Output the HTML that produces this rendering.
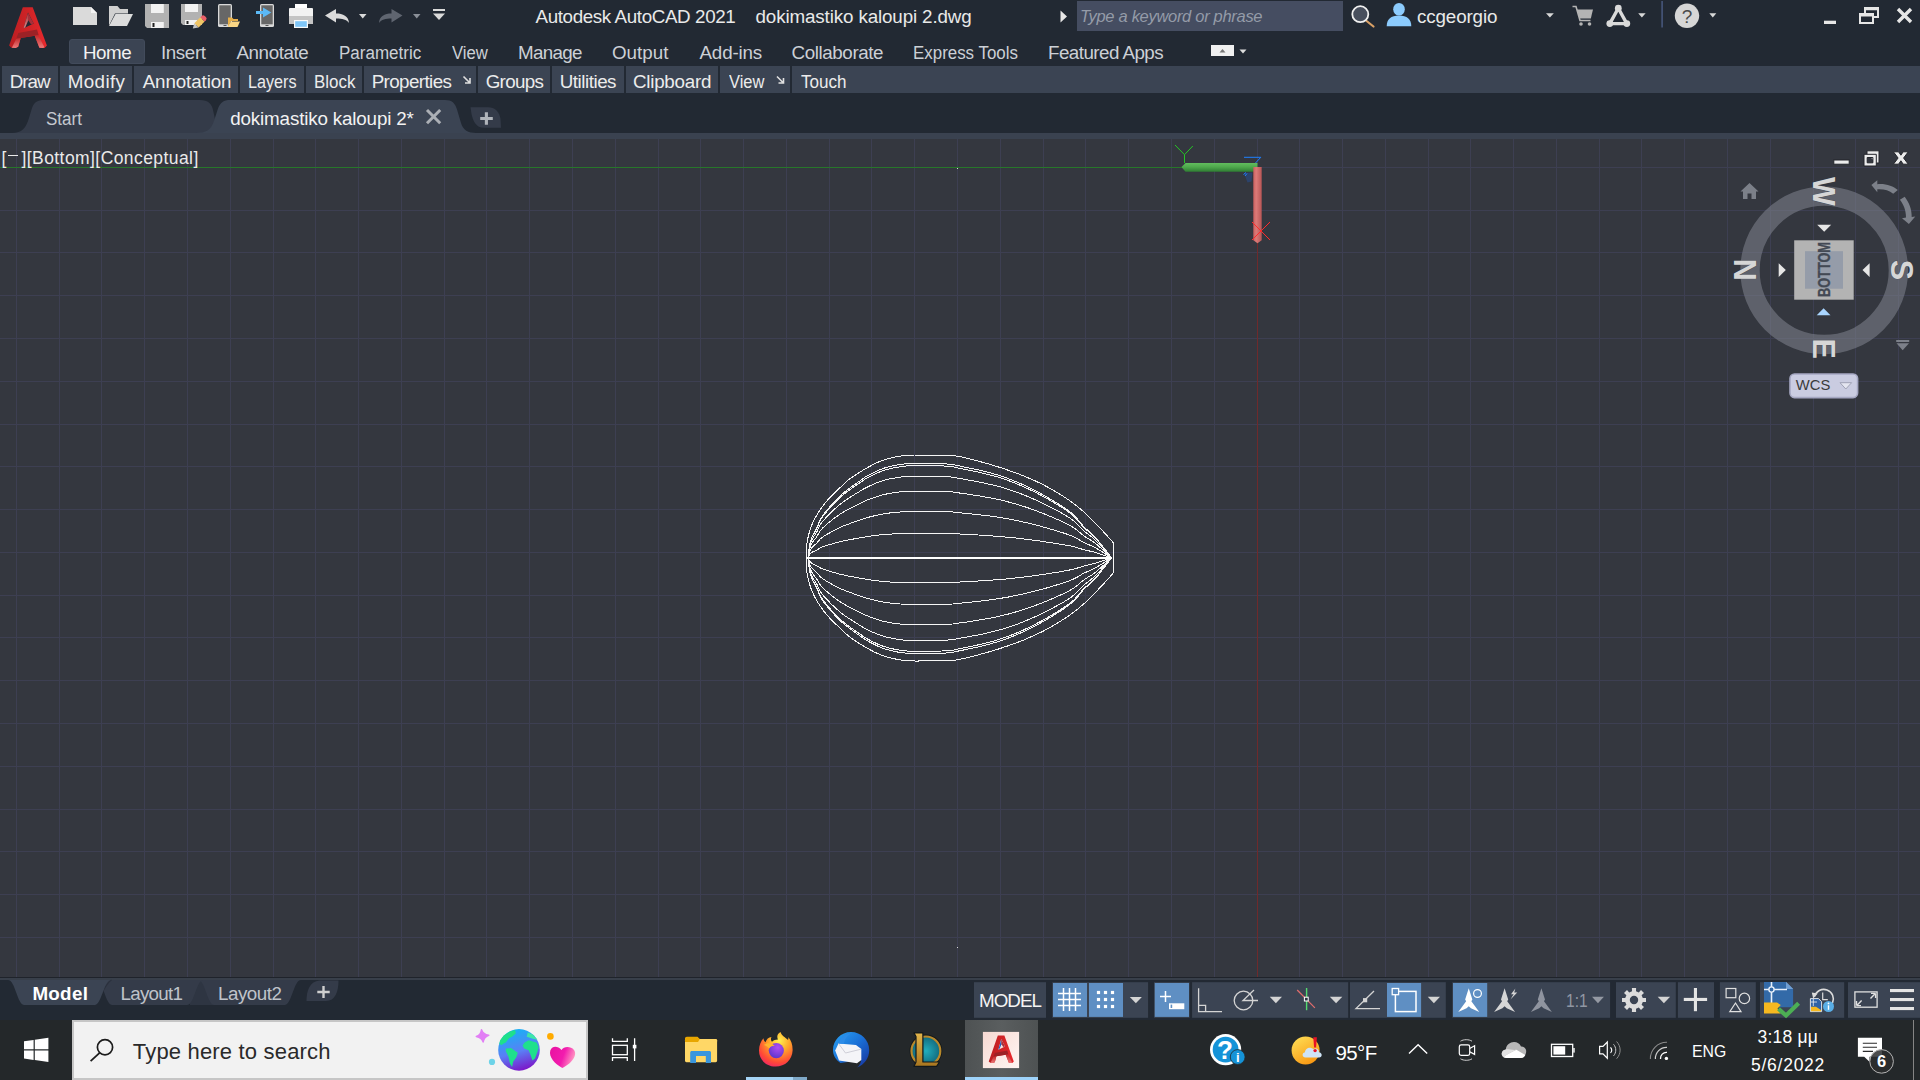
<!DOCTYPE html>
<html lang="en"><head><meta charset="utf-8"><title>Autodesk AutoCAD 2021 - dokimastiko kaloupi 2.dwg</title>
<style>
*{margin:0;padding:0;box-sizing:border-box}
html,body{width:1920px;height:1080px;overflow:hidden;background:#222933;font-family:"Liberation Sans",sans-serif}
.abs,.t,svg.i{position:absolute}
.t{white-space:pre;line-height:1;}
.pb{position:absolute;top:66px;height:27px;background:#3b4453}
</style></head>
<body>
<div id="titlebar" class="abs" style="left:0;top:0;width:1920px;height:39px;background:#222933"></div>
<svg class="i" id="qat" style="left:0;top:0" width="1920" height="66" viewBox="0 0 1920 66">
<defs><linearGradient id="ag" x1="0" y1="0" x2="1" y2="0"><stop offset="0" stop-color="#ba1e22"/><stop offset="0.5" stop-color="#cf2326"/><stop offset="1" stop-color="#e8292d"/></linearGradient><linearGradient id="al" x1="0" y1="0" x2="0" y2="1"><stop offset="0" stop-color="#c02a2c"/><stop offset="1" stop-color="#ee7a7a"/></linearGradient><linearGradient id="ab" x1="0" y1="0" x2="0" y2="1"><stop offset="0" stop-color="#a32a30"/><stop offset="1" stop-color="#e08a8a"/></linearGradient></defs><path d="M22.8 7.3H32.7L46.9 45.6L44.6 48L39.4 47.7L34.75 35.8L20.7 37.9L18.2 46.7L15.6 48L11.4 47.7L9.1 45.6ZM28 12.4L23.6 28.3L33.7 23.6Z" fill="url(#ag)" fill-rule="evenodd"/><path d="M28 12.4L23.6 28.3L25.3 27.2L28.3 20.3Z" fill="url(#ab)"/><path d="M28 12.4L33.7 23.6L31.1 24.4L28 19.7Z" fill="#a8303a"/><path d="M18.3 33L37 29.4L38.7 35.2L34.75 35.8L20.7 37.9L16.3 38.7Z" fill="#9c2226"/><path d="M16.3 38.7L20.7 37.9L18.2 46.7L15.6 48L11.8 47.7Z" fill="url(#al)"/><path d="M34.75 35.8L38.2 35.3L44.2 46.8L43.5 48L39.4 47.7Z" fill="url(#al)"/>
<path d="M73 7H91L97 13V25H73Z" fill="#dadada"/><path d="M91 7V13H97Z" fill="#f4f4f4"/>
<path d="M109 25.5V6H117.5L120 9H128V13.5H115Z" fill="#d0d0d0"/><path d="M109 26L115.5 14H133L127 26Z" fill="#dcdcdc"/>
<path d="M145 4H169V28H147L145 26Z" fill="#b2b2b2"/><rect x="151" y="4" width="12.8" height="9" fill="#f2f2f2"/><rect x="151" y="22" width="12.8" height="6" fill="#f2f2f2"/><rect x="152.5" y="23" width="2" height="4" fill="#222"/>
<path d="M181 4H202V25H183L181 23Z" fill="#b2b2b2"/><rect x="185" y="4" width="13" height="8" fill="#f2f2f2"/><rect x="185" y="20" width="12" height="5" fill="#f2f2f2"/><rect x="186.5" y="21" width="2" height="3" fill="#222"/>
<path d="M194.3 23.2L200.3 17.2L204.6 21.5L198.6 27.5Z" fill="#f0c565"/><path d="M200.3 17.2L201.6 15.9a2.2 2.2 0 0 1 3.1 0l1.2 1.2a2.2 2.2 0 0 1 0 3.1L204.6 21.5Z" fill="#ea5f68"/><path d="M192.8 28.6L194.3 23.2L198.6 27.5Z" fill="#c4c4c4"/>
<rect x="218" y="4" width="14" height="23" rx="1.5" fill="#d8d8d8"/><rect x="219.3" y="5.3" width="11.4" height="19" fill="#676767"/><rect x="223.5" y="25" width="3" height="1" fill="#555"/>
<path d="M228 27V17.5H232L233.5 19H238V21H231Z" fill="#e8b04a"/><path d="M228 27L231 21.5H240L237.5 27Z" fill="#fad685"/>
<rect x="260" y="4" width="14" height="23" rx="1.5" fill="#d8d8d8"/><rect x="261.3" y="5.3" width="11.4" height="19" fill="#676767"/><rect x="265.5" y="25" width="3" height="1" fill="#555"/>
<path d="M256 11H263V7.6L271.3 12.5L263 17.4V14H256Z" fill="#5bb9f6"/>
<rect x="295" y="4" width="12" height="7" fill="#ffffff"/><rect x="289" y="8" width="24" height="9" rx="1" fill="#f2f2f2"/><rect x="289" y="16" width="24" height="8" fill="#c4c4c4"/><rect x="294" y="20" width="14" height="8" fill="#fafafa"/><rect x="295.2" y="21.2" width="11.6" height="5.6" fill="#7fc6f8"/>
<path d="M325 15.5L336 9V13.5C343 13.5 348.5 16 349 23C346.5 19.5 342.5 18.5 336 18.5V22.5Z" fill="#dadada"/>
<path d="M359 14H366.5L362.75 18.5Z" fill="#dadada"/>
<path d="M402.5 15.5L391.5 9V13.5C384.5 13.5 379.5 16 379 23C381.5 19.5 385.5 18.5 391.5 18.5V22.5Z" fill="#5f6570"/>
<path d="M413 14H420.5L416.75 18.5Z" fill="#8a8f98"/>
<rect x="433" y="9" width="12" height="2" fill="#dadada"/><path d="M433 13.5H445L439.0 20Z" fill="#dadada"/>
<path d="M1060.5 10.5V22.5L1067 16.5Z" fill="#e8e8e8"/>
<path d="M1366 20.5L1373.5 26.5" stroke="#d9a066" stroke-width="2.2" stroke-linecap="round"/><circle cx="1360.3" cy="14.2" r="8" fill="#484f5d" stroke="#f0f0f0" stroke-width="1.8"/>
<ellipse cx="1399" cy="9.3" rx="5.8" ry="6.3" fill="#8ccbfd"/><path d="M1386.7 26.2C1386.7 19 1391 15.5 1399 15.5C1407 15.5 1411.3 19 1411.3 26.2Z" fill="#8ccbfd"/>
<path d="M1546 13.2H1553.8L1549.9 17.4Z" fill="#d8d8d8"/>
<path d="M1572.5 6.5H1576L1580 20.5H1590.5" stroke="#b4b4b4" stroke-width="1.6" fill="none"/><path d="M1577 9.5H1593L1590.8 18.5H1579.6Z" fill="#b4b4b4"/><circle cx="1581" cy="24" r="1.8" fill="#b4b4b4"/><circle cx="1589.5" cy="24" r="1.8" fill="#b4b4b4"/>
<path d="M1618.3 8.2L1609.8 23.6H1626.8Z" stroke="#dadada" stroke-width="3.4" fill="none" stroke-linejoin="round"/><circle cx="1618.3" cy="8.2" r="3.4" fill="#dadada"/><circle cx="1609.8" cy="23.6" r="3.4" fill="#dadada"/><circle cx="1626.8" cy="23.6" r="3.4" fill="#dadada"/>
<path d="M1638.2 13.2H1645.6L1641.9 17.4Z" fill="#d8d8d8"/>
<rect x="1661.3" y="1" width="1.6" height="26.5" fill="#46567a"/>
<circle cx="1687" cy="15.8" r="12.2" fill="#d6d6d6"/><text x="1687" y="22.5" text-anchor="middle" font-family="Liberation Sans,sans-serif" font-size="19" fill="#4a4a4a">?</text>
<path d="M1709.3 13.2H1716.3L1712.8 17.4Z" fill="#d8d8d8"/>
<rect x="1824" y="20.7" width="12" height="3.3" fill="#e6e6e6"/>
<path d="M1864 7H1879V18.1H1874V16.1H1877V10.3H1866V13.1H1864Z" fill="#e6e6e6"/>
<path d="M1859 13.1H1874V24H1859ZM1861 16.4V22H1872V16.4Z" fill="#e6e6e6" fill-rule="evenodd"/>
<path d="M1898 9L1911 22M1911 9L1898 22" stroke="#e6e6e6" stroke-width="3.4"/>
</svg>
<div class="abs" style="left:1077px;top:1px;width:266px;height:30px;background:#454d61"></div>
<div class="abs" style="left:69px;top:39px;width:76px;height:25.3px;background:#3b4453;border-radius:3px;border:1px solid #424b5b"></div>
<div class="abs" style="left:1211px;top:45px;width:23px;height:11px;background:#f0f0f0"></div>
<svg class="i" style="left:1211px;top:45px" width="40" height="11" viewBox="0 0 40 11"><path d="M8.5 7.5 L11.5 4 L14.5 7.5Z" fill="#777"/><path d="M28.5 4.5 h7 l-3.5 4z" fill="#ddd"/></svg>
<div class="pb" style="left:2px;width:56px"></div>
<div class="pb" style="left:60px;width:72px"></div>
<div class="pb" style="left:134px;width:104px"></div>
<div class="pb" style="left:240px;width:64px"></div>
<div class="pb" style="left:306px;width:56px"></div>
<div class="pb" style="left:364px;width:112px"></div>
<div class="pb" style="left:478px;width:72px"></div>
<div class="pb" style="left:552px;width:71.5px"></div>
<div class="pb" style="left:626px;width:92px"></div>
<div class="pb" style="left:720px;width:70px"></div>
<div class="pb" style="left:792px;width:1128px"></div>
<svg class="i" style="left:0;top:66px" width="1920" height="27" viewBox="0 66 1920 27"><path d="M463.5 76.5L469.5 82.5M465.0 83.0H470.0V78.0" stroke="#e0e0e0" stroke-width="1.6" fill="none"/><path d="M777 76.5L783 82.5M778.5 83.0H783.5V78.0" stroke="#e0e0e0" stroke-width="1.6" fill="none"/></svg>
<svg class="i" id="doctabs" style="left:0;top:93px" width="1920" height="40" viewBox="0 93 1920 40">
<path d="M0 133H12C22 133 26 128 29 118L32 108C34 102 38 100 44 100H200C208 100 212 104 213 110L216 124C217 130 212 133 206 133Z" fill="#343b49"/>
<path d="M196 133C206 133 211 130 214 121L218 108.5C220 102.5 224 100 230 100H445C452 100 455 103 457 109.5L461 123C463 130 468 133 476 133Z" fill="#3b4453"/>
<path d="M470.5 107.3H488C495 107.3 499.5 112 500.5 119L501 127.8H484C476 127.8 473 121 471.5 114Z" fill="#343b49"/>
<path d="M486.4 112.2V124.8M480.2 118.5H492.8" stroke="#b0b4ba" stroke-width="3.1"/>
<path d="M427 110L440.2 123.2M440.2 110L427 123.2" stroke="#abafb5" stroke-width="3"/>
</svg>
<div class="abs" style="left:0;top:133px;width:1920px;height:6px;background:#3a4250"></div>
<svg class="i" id="viewport" style="left:0;top:139px" width="1920" height="838" viewBox="0 139 1920 838">
<rect x="0" y="139" width="1920" height="838" fill="#34373f"/>
<path d="M16.5 139V977M59.5 139V977M101.5 139V977M144.5 139V977M187.5 139V977M230.5 139V977M273.5 139V977M315.5 139V977M358.5 139V977M401.5 139V977M444.5 139V977M486.5 139V977M529.5 139V977M572.5 139V977M615.5 139V977M658.5 139V977M700.5 139V977M743.5 139V977M786.5 139V977M829.5 139V977M871.5 139V977M914.5 139V977M957.5 139V977M1000.5 139V977M1043.5 139V977M1085.5 139V977M1128.5 139V977M1171.5 139V977M1214.5 139V977M1299.5 139V977M1342.5 139V977M1385.5 139V977M1428.5 139V977M1470.5 139V977M1513.5 139V977M1556.5 139V977M1599.5 139V977M1641.5 139V977M1684.5 139V977M1727.5 139V977M1770.5 139V977M1813.5 139V977M1855.5 139V977M1898.5 139V977M0 210.5H1920M0 252.5H1920M0 295.5H1920M0 338.5H1920M0 381.5H1920M0 424.5H1920M0 466.5H1920M0 509.5H1920M0 552.5H1920M0 595.5H1920M0 637.5H1920M0 680.5H1920M0 723.5H1920M0 766.5H1920M0 809.5H1920M0 851.5H1920M0 894.5H1920M0 937.5H1920" stroke="#3d3f52" stroke-width="1" fill="none" shape-rendering="crispEdges"/>
<path d="M0 167.5H1185" stroke="#27762a" stroke-width="1" shape-rendering="crispEdges"/>
<path d="M1257.5 242V977" stroke="#6e2a2c" stroke-width="1" shape-rendering="crispEdges"/>
<path d="M1257.5 167.5H1920" stroke="#3d3f52" stroke-width="1" shape-rendering="crispEdges"/>
<path d="M1257.5 139V163" stroke="#3d3f52" stroke-width="1" shape-rendering="crispEdges"/>
<rect x="957" y="168" width="1" height="1" fill="#d8d8d8"/><rect x="957" y="947" width="1" height="1" fill="#d8d8d8"/>
<defs><linearGradient id="gy" x1="0" y1="0" x2="0" y2="1"><stop offset="0" stop-color="#62bd5e"/><stop offset="0.45" stop-color="#4fa94d"/><stop offset="1" stop-color="#2f7d33"/></linearGradient><linearGradient id="gx" x1="0" y1="0" x2="1" y2="0"><stop offset="0" stop-color="#c95f5f"/><stop offset="0.35" stop-color="#dc7a78"/><stop offset="1" stop-color="#b85656"/></linearGradient></defs><path d="M1244 173L1252.5 172.5L1251.5 181.5L1247.5 182.5Z" fill="#2b4570" opacity="0.9"/><path d="M1243.5 174.5L1246 172.5M1245 176L1247 173.5" stroke="#1e7fff" stroke-width="1"/><path d="M1244 157.3H1260.8L1255.5 163" stroke="#1f80ff" stroke-width="1" fill="none"/><path d="M1181.5 167L1185.5 163H1257.5V171.7H1185.5Z" fill="url(#gy)"/><path d="M1253.3 167H1261.7V240.3L1257.5 243.3L1253.3 240.3Z" fill="url(#gx)"/><path d="M1175 145L1184.5 154.7L1192.8 146M1184.5 154.7V163" stroke="#25c425" stroke-width="1" fill="none"/><path d="M1252 222L1270 240M1270 222L1252 240" stroke="#ff2a2a" stroke-width="1" fill="none"/>
<path d="M806.0 557.8 806.1 555.6 806.2 553.5 806.3 551.3 806.4 549.1 806.5 547.0 806.7 545.0 807.0 543.1 807.3 541.2 807.6 539.3 808.0 537.5 808.4 535.7 808.9 533.9 809.4 532.0 810.0 530.2 810.6 528.3 811.3 526.5 812.0 524.6 812.8 522.8 813.7 520.9 814.6 519.1 815.6 517.2 816.6 515.4 817.7 513.5 818.9 511.7 820.1 509.9 821.4 508.0 822.7 506.2 824.1 504.3 825.6 502.5 827.2 500.6 828.9 498.7 830.6 496.9 832.5 495.0 834.4 493.1 836.3 491.3 838.3 489.4 840.2 487.5 842.1 485.7 844.0 483.8 846.1 482.0 848.2 480.1 850.6 478.3 853.3 476.4 856.2 474.5 859.2 472.5 862.4 470.6 865.4 468.8 868.3 467.2 871.0 465.7 873.5 464.4 876.0 463.2 878.5 462.0 881.1 461.0 883.9 460.0 887.0 459.1 890.2 458.2 893.5 457.4 896.9 456.7 900.4 456.1 903.9 455.6 907.5 455.3 911.1 455.1 914.8 455.0 918.5 455.0 922.3 455.1 926.0 455.1 929.8 455.1 933.8 455.2 937.8 455.2 941.6 455.4 945.2 455.5 948.3 455.6 950.7 455.7 952.6 455.8 954.2 455.8 955.7 456.0 957.6 456.3 960.0 456.7 963.1 457.3 966.6 458.2 970.4 459.1 974.4 460.1 978.4 461.2 982.2 462.2 985.9 463.2 989.6 464.3 993.3 465.4 997.0 466.5 1000.7 467.7 1004.4 468.9 1008.1 470.2 1011.8 471.5 1015.5 472.8 1019.3 474.2 1023.0 475.7 1026.7 477.2 1030.4 478.8 1034.1 480.4 1037.8 482.1 1041.5 483.9 1045.2 485.8 1048.9 487.8 1052.7 489.9 1056.5 492.2 1060.3 494.5 1064.1 496.9 1067.7 499.3 1071.1 501.7 1074.2 504.0 1077.1 506.2 1079.8 508.4 1082.4 510.7 1085.1 513.1 1087.8 515.6 1090.7 518.4 1093.6 521.4 1096.6 524.4 1099.4 527.5 1102.1 530.3 1104.4 532.8 1106.4 534.9 1108.1 536.8 1109.6 538.4 1110.9 539.9 1112.1 541.4 1113.3 542.8 1113.3 542.8 M806.0 557.8 806.1 560.0 806.2 562.1 806.3 564.3 806.4 566.5 806.5 568.6 806.7 570.6 807.0 572.6 807.3 574.5 807.6 576.3 808.0 578.1 808.4 580.0 808.9 581.8 809.4 583.7 810.0 585.5 810.6 587.4 811.3 589.2 812.0 591.1 812.8 592.9 813.7 594.8 814.6 596.7 815.6 598.5 816.6 600.4 817.7 602.2 818.9 604.1 820.1 605.9 821.4 607.8 822.7 609.6 824.1 611.5 825.6 613.4 827.2 615.2 828.9 617.1 830.6 619.0 832.5 620.8 834.4 622.7 836.3 624.6 838.3 626.5 840.2 628.3 842.1 630.2 844.0 632.0 846.1 633.9 848.2 635.8 850.6 637.6 853.3 639.5 856.2 641.5 859.2 643.4 862.4 645.3 865.4 647.1 868.3 648.8 871.0 650.2 873.5 651.6 876.0 652.8 878.5 653.9 881.1 655.0 883.9 656.0 887.0 656.9 890.2 657.8 893.5 658.6 896.9 659.3 900.4 659.9 903.9 660.4 907.5 660.7 911.1 660.9 914.8 661.0 918.5 661.0 922.3 660.9 926.0 660.9 929.8 660.9 933.8 660.8 937.8 660.7 941.6 660.6 945.2 660.5 948.3 660.4 950.7 660.3 952.6 660.2 954.2 660.2 955.7 660.0 957.6 659.7 960.0 659.3 963.1 658.6 966.6 657.8 970.4 656.9 974.4 655.9 978.4 654.8 982.2 653.8 985.9 652.7 989.6 651.7 993.3 650.6 997.0 649.5 1000.7 648.3 1004.4 647.0 1008.1 645.8 1011.8 644.5 1015.5 643.1 1019.3 641.7 1023.0 640.3 1026.7 638.7 1030.4 637.1 1034.1 635.5 1037.8 633.7 1041.5 632.0 1045.2 630.1 1048.9 628.1 1052.7 625.9 1056.5 623.7 1060.3 621.3 1064.1 618.9 1067.7 616.5 1071.1 614.1 1074.2 611.8 1077.1 609.6 1079.8 607.3 1082.4 605.1 1085.1 602.7 1087.8 600.2 1090.7 597.4 1093.6 594.4 1096.6 591.3 1099.4 588.2 1102.1 585.4 1104.4 582.9 1106.4 580.8 1108.1 578.9 1109.6 577.3 1110.9 575.8 1112.1 574.3 1113.3 572.9 1113.3 572.9 M1113.3 542.8V573.2 M808.5 557.8 808.6 556.0 808.7 554.2 808.8 552.4 808.9 550.7 809.0 549.0 809.2 547.4 809.4 546.0 809.7 544.6 810.0 543.3 810.3 542.1 810.7 541.0 811.0 539.8 811.3 538.8 811.7 537.8 812.0 536.9 812.4 536.0 812.8 535.1 813.3 534.2 813.8 533.2 814.3 532.3 814.9 531.4 815.5 530.4 816.1 529.3 816.7 528.0 817.3 526.6 818.0 525.0 818.7 523.2 819.4 521.5 820.2 519.8 821.1 518.1 822.1 516.6 823.1 515.1 824.2 513.6 825.4 512.1 826.6 510.6 827.8 509.1 829.1 507.6 830.4 506.0 831.8 504.5 833.2 502.9 834.6 501.4 836.1 499.9 837.6 498.4 839.0 497.0 840.5 495.6 842.0 494.2 843.7 492.7 845.6 491.2 847.8 489.5 850.3 487.7 852.9 485.8 855.5 483.9 857.9 482.2 860.0 480.8 861.7 479.6 862.9 478.7 864.1 477.9 865.2 477.1 866.6 476.3 868.3 475.4 870.4 474.3 872.8 473.0 875.4 471.7 878.1 470.5 881.0 469.3 883.9 468.2 887.0 467.3 890.2 466.4 893.5 465.7 896.9 465.0 900.4 464.4 903.9 464.0 907.5 463.6 911.1 463.4 914.8 463.3 918.5 463.3 922.3 463.3 926.0 463.3 929.8 463.3 933.8 463.4 937.8 463.5 941.6 463.7 945.2 463.8 948.3 464.1 950.7 464.3 952.6 464.6 954.2 464.8 955.7 465.2 957.6 465.6 960.0 466.1 963.1 466.8 966.6 467.5 970.4 468.2 974.4 469.1 978.4 469.9 982.2 470.9 985.9 471.8 989.6 472.7 993.3 473.7 997.0 474.8 1000.7 475.9 1004.4 477.2 1008.1 478.5 1011.8 480.0 1015.5 481.5 1019.3 483.1 1023.0 484.7 1026.7 486.5 1030.4 488.2 1034.1 490.1 1037.8 492.0 1041.5 494.0 1045.2 496.1 1048.9 498.3 1052.7 500.5 1056.6 502.9 1060.6 505.4 1064.4 507.9 1067.9 510.4 1071.1 512.8 1073.8 515.2 1076.2 517.7 1078.3 520.1 1080.2 522.5 1082.0 524.7 1083.9 526.7 1085.7 528.5 1087.5 530.0 1089.1 531.4 1090.7 532.7 1092.3 534.2 1094.0 535.9 1095.8 537.8 1097.6 540.0 1099.4 542.2 1101.2 544.4 1102.9 546.6 1104.4 548.5 1105.8 550.3 1107.0 551.9 1108.1 553.4 1109.2 554.8 1110.3 556.3 1111.4 557.8 M808.5 557.8 808.6 556.1 808.7 554.3 808.8 552.6 808.9 550.8 809.0 549.2 809.2 547.7 809.4 546.2 809.7 544.9 810.0 543.7 810.3 542.5 810.7 541.4 811.0 540.3 811.3 539.3 811.7 538.3 812.0 537.4 812.4 536.6 812.8 535.7 813.3 534.8 813.8 533.8 814.3 532.9 814.9 532.0 815.5 531.0 816.1 530.0 816.7 528.8 817.3 527.3 818.0 525.8 818.7 524.1 819.4 522.4 820.2 520.7 821.1 519.1 822.1 517.6 823.1 516.1 824.2 514.7 825.4 513.2 826.6 511.8 827.8 510.3 829.1 508.8 830.4 507.3 831.8 505.8 833.2 504.3 834.6 502.8 836.1 501.3 837.6 499.9 839.0 498.5 840.5 497.1 842.0 495.7 843.7 494.3 845.6 492.8 847.8 491.1 850.3 489.4 852.9 487.5 855.5 485.7 857.9 484.1 860.0 482.7 861.7 481.5 862.9 480.6 864.1 479.8 865.2 479.1 866.6 478.3 868.3 477.4 870.4 476.3 872.8 475.1 875.4 473.8 878.1 472.6 881.0 471.4 883.9 470.4 887.0 469.5 890.2 468.7 893.5 467.9 896.9 467.3 900.4 466.7 903.9 466.2 907.5 465.9 911.1 465.7 914.8 465.6 918.5 465.6 922.3 465.6 926.0 465.6 929.8 465.6 933.8 465.7 937.8 465.8 941.6 465.9 945.2 466.1 948.3 466.3 950.7 466.6 952.6 466.8 954.2 467.1 955.7 467.5 957.6 467.9 960.0 468.4 963.1 469.0 966.6 469.7 970.4 470.4 974.4 471.2 978.4 472.1 982.2 473.0 985.9 473.9 989.6 474.8 993.3 475.8 997.0 476.8 1000.7 477.9 1004.4 479.2 1008.1 480.5 1011.8 481.9 1015.5 483.3 1019.3 484.9 1023.0 486.5 1026.7 488.2 1030.4 489.9 1034.1 491.7 1037.8 493.6 1041.5 495.6 1045.2 497.6 1048.9 499.7 1052.7 501.9 1056.6 504.3 1060.6 506.7 1064.4 509.1 1067.9 511.6 1071.1 513.9 1073.8 516.3 1076.2 518.6 1078.3 521.0 1080.2 523.3 1082.0 525.5 1083.9 527.5 1085.7 529.2 1087.5 530.7 1089.1 532.0 1090.7 533.3 1092.3 534.8 1094.0 536.4 1095.8 538.3 1097.6 540.4 1099.4 542.6 1101.2 544.8 1102.9 546.9 1104.4 548.8 1105.8 550.5 1107.0 552.0 1108.1 553.5 1109.2 554.9 1110.3 556.3 1111.4 557.8 M808.5 557.8 808.6 556.3 808.7 554.7 808.8 553.2 808.9 551.6 809.0 550.2 809.2 548.8 809.4 547.6 809.7 546.4 810.0 545.3 810.3 544.2 810.7 543.2 811.0 542.3 811.3 541.4 811.7 540.5 812.0 539.7 812.4 539.0 812.8 538.2 813.3 537.4 813.8 536.6 814.3 535.8 814.9 534.9 815.5 534.1 816.1 533.1 816.7 532.1 817.3 530.8 818.0 529.4 818.7 527.9 819.4 526.4 820.2 524.9 821.1 523.5 822.1 522.1 823.1 520.8 824.2 519.6 825.4 518.3 826.6 517.0 827.8 515.7 829.1 514.4 830.4 513.1 831.8 511.7 833.2 510.4 834.6 509.0 836.1 507.7 837.6 506.5 839.0 505.2 840.5 504.0 842.0 502.8 843.7 501.5 845.6 500.2 847.8 498.7 850.3 497.2 852.9 495.5 855.5 493.9 857.9 492.5 860.0 491.2 861.7 490.2 862.9 489.4 864.1 488.7 865.2 488.1 866.6 487.4 868.3 486.6 870.4 485.6 872.8 484.5 875.4 483.4 878.1 482.3 881.0 481.3 883.9 480.3 887.0 479.6 890.2 478.8 893.5 478.2 896.9 477.6 900.4 477.1 903.9 476.7 907.5 476.4 911.1 476.2 914.8 476.1 918.5 476.1 922.3 476.1 926.0 476.1 929.8 476.1 933.8 476.2 937.8 476.3 941.6 476.4 945.2 476.6 948.3 476.8 950.7 477.0 952.6 477.2 954.2 477.4 955.7 477.7 957.6 478.1 960.0 478.6 963.1 479.1 966.6 479.7 970.4 480.4 974.4 481.1 978.4 481.8 982.2 482.6 985.9 483.4 989.6 484.3 993.3 485.1 997.0 486.0 1000.7 487.0 1004.4 488.1 1008.1 489.3 1011.8 490.5 1015.5 491.8 1019.3 493.2 1023.0 494.6 1026.7 496.1 1030.4 497.7 1034.1 499.3 1037.8 500.9 1041.5 502.7 1045.2 504.5 1048.9 506.3 1052.7 508.3 1056.6 510.4 1060.6 512.5 1064.4 514.7 1067.9 516.8 1071.1 518.9 1073.8 521.0 1076.2 523.1 1078.3 525.2 1080.2 527.2 1082.0 529.2 1083.9 530.9 1085.7 532.4 1087.5 533.8 1089.1 534.9 1090.7 536.1 1092.3 537.4 1094.0 538.8 1095.8 540.5 1097.6 542.4 1099.4 544.3 1101.2 546.3 1102.9 548.1 1104.4 549.8 1105.8 551.3 1107.0 552.7 1108.1 554.0 1109.2 555.2 1110.3 556.5 1111.4 557.8 M808.5 557.8 808.6 556.6 808.7 555.3 808.8 554.0 808.9 552.8 809.0 551.6 809.2 550.5 809.4 549.4 809.7 548.5 810.0 547.6 810.3 546.7 810.7 545.9 811.0 545.1 811.3 544.4 811.7 543.7 812.0 543.1 812.4 542.4 812.8 541.8 813.3 541.1 813.8 540.5 814.3 539.8 814.9 539.1 815.5 538.4 816.1 537.7 816.7 536.8 817.3 535.8 818.0 534.6 818.7 533.4 819.4 532.2 820.2 530.9 821.1 529.8 822.1 528.7 823.1 527.6 824.2 526.6 825.4 525.6 826.6 524.5 827.8 523.4 829.1 522.4 830.4 521.3 831.8 520.2 833.2 519.1 834.6 518.0 836.1 516.9 837.6 515.9 839.0 514.9 840.5 513.9 842.0 512.9 843.7 511.9 845.6 510.8 847.8 509.6 850.3 508.3 852.9 507.0 855.5 505.7 857.9 504.5 860.0 503.4 861.7 502.6 862.9 502.0 864.1 501.4 865.2 500.9 866.6 500.3 868.3 499.6 870.4 498.8 872.8 498.0 875.4 497.1 878.1 496.2 881.0 495.3 883.9 494.6 887.0 493.9 890.2 493.3 893.5 492.8 896.9 492.3 900.4 491.9 903.9 491.6 907.5 491.3 911.1 491.2 914.8 491.1 918.5 491.1 922.3 491.1 926.0 491.1 929.8 491.1 933.8 491.2 937.8 491.2 941.6 491.3 945.2 491.5 948.3 491.6 950.7 491.8 952.6 492.0 954.2 492.2 955.7 492.4 957.6 492.7 960.0 493.1 963.1 493.5 966.6 494.0 970.4 494.6 974.4 495.2 978.4 495.8 982.2 496.4 985.9 497.1 989.6 497.8 993.3 498.5 997.0 499.2 1000.7 500.0 1004.4 500.9 1008.1 501.9 1011.8 502.9 1015.5 503.9 1019.3 505.1 1023.0 506.2 1026.7 507.4 1030.4 508.7 1034.1 510.0 1037.8 511.4 1041.5 512.8 1045.2 514.3 1048.9 515.8 1052.7 517.4 1056.6 519.1 1060.6 520.8 1064.4 522.6 1067.9 524.3 1071.1 526.1 1073.8 527.8 1076.2 529.5 1078.3 531.2 1080.2 532.9 1082.0 534.4 1083.9 535.9 1085.7 537.1 1087.5 538.2 1089.1 539.1 1090.7 540.1 1092.3 541.1 1094.0 542.3 1095.8 543.7 1097.6 545.2 1099.4 546.8 1101.2 548.4 1102.9 549.9 1104.4 551.3 1105.8 552.5 1107.0 553.6 1108.1 554.7 1109.2 555.7 1110.3 556.7 1111.4 557.8 M808.5 557.8 808.6 556.9 808.7 556.0 808.8 555.2 808.9 554.3 809.0 553.5 809.2 552.7 809.4 552.0 809.7 551.3 810.0 550.7 810.3 550.1 810.7 549.5 811.0 549.0 811.3 548.5 811.7 548.0 812.0 547.5 812.4 547.1 812.8 546.7 813.3 546.2 813.8 545.7 814.3 545.3 814.9 544.8 815.5 544.3 816.1 543.8 816.7 543.2 817.3 542.5 818.0 541.7 818.7 540.8 819.4 540.0 820.2 539.1 821.1 538.3 822.1 537.6 823.1 536.8 824.2 536.1 825.4 535.4 826.6 534.6 827.8 533.9 829.1 533.2 830.4 532.4 831.8 531.6 833.2 530.9 834.6 530.1 836.1 529.4 837.6 528.6 839.0 527.9 840.5 527.3 842.0 526.6 843.7 525.8 845.6 525.1 847.8 524.3 850.3 523.4 852.9 522.4 855.5 521.5 857.9 520.7 860.0 520.0 861.7 519.4 862.9 519.0 864.1 518.6 865.2 518.2 866.6 517.8 868.3 517.3 870.4 516.8 872.8 516.2 875.4 515.5 878.1 514.9 881.0 514.3 883.9 513.8 887.0 513.4 890.2 512.9 893.5 512.6 896.9 512.2 900.4 512.0 903.9 511.7 907.5 511.6 911.1 511.5 914.8 511.4 918.5 511.4 922.3 511.4 926.0 511.4 929.8 511.4 933.8 511.4 937.8 511.5 941.6 511.6 945.2 511.7 948.3 511.8 950.7 511.9 952.6 512.0 954.2 512.2 955.7 512.3 957.6 512.5 960.0 512.8 963.1 513.1 966.6 513.4 970.4 513.8 974.4 514.2 978.4 514.7 982.2 515.1 985.9 515.6 989.6 516.0 993.3 516.5 997.0 517.0 1000.7 517.6 1004.4 518.2 1008.1 518.9 1011.8 519.6 1015.5 520.3 1019.3 521.1 1023.0 521.9 1026.7 522.8 1030.4 523.6 1034.1 524.6 1037.8 525.5 1041.5 526.5 1045.2 527.5 1048.9 528.6 1052.7 529.7 1056.6 530.9 1060.6 532.1 1064.4 533.3 1067.9 534.5 1071.1 535.7 1073.8 536.9 1076.2 538.1 1078.3 539.3 1080.2 540.4 1082.0 541.5 1083.9 542.5 1085.7 543.4 1087.5 544.1 1089.1 544.8 1090.7 545.5 1092.3 546.2 1094.0 547.0 1095.8 548.0 1097.6 549.0 1099.4 550.1 1101.2 551.2 1102.9 552.3 1104.4 553.3 1105.8 554.1 1107.0 554.9 1108.1 555.6 1109.2 556.3 1110.3 557.1 1111.4 557.8 M808.5 557.8 808.6 557.3 808.7 556.9 808.8 556.4 808.9 555.9 809.0 555.5 809.2 555.1 809.4 554.7 809.7 554.4 810.0 554.0 810.3 553.7 810.7 553.4 811.0 553.1 811.3 552.9 811.7 552.6 812.0 552.4 812.4 552.2 812.8 551.9 813.3 551.7 813.8 551.4 814.3 551.2 814.9 550.9 815.5 550.7 816.1 550.4 816.7 550.1 817.3 549.7 818.0 549.3 818.7 548.8 819.4 548.4 820.2 547.9 821.1 547.5 822.1 547.1 823.1 546.7 824.2 546.3 825.4 546.0 826.6 545.6 827.8 545.2 829.1 544.8 830.4 544.4 831.8 544.0 833.2 543.6 834.6 543.2 836.1 542.8 837.6 542.4 839.0 542.0 840.5 541.7 842.0 541.3 843.7 540.9 845.6 540.5 847.8 540.1 850.3 539.6 852.9 539.1 855.5 538.7 857.9 538.2 860.0 537.8 861.7 537.5 862.9 537.3 864.1 537.1 865.2 536.9 866.6 536.7 868.3 536.4 870.4 536.1 872.8 535.8 875.4 535.5 878.1 535.2 881.0 534.8 883.9 534.6 887.0 534.3 890.2 534.1 893.5 533.9 896.9 533.7 900.4 533.6 903.9 533.5 907.5 533.4 911.1 533.3 914.8 533.3 918.5 533.3 922.3 533.3 926.0 533.3 929.8 533.3 933.8 533.3 937.8 533.4 941.6 533.4 945.2 533.4 948.3 533.5 950.7 533.6 952.6 533.6 954.2 533.7 955.7 533.8 957.6 533.9 960.0 534.0 963.1 534.2 966.6 534.4 970.4 534.6 974.4 534.8 978.4 535.0 982.2 535.3 985.9 535.5 989.6 535.7 993.3 536.0 997.0 536.3 1000.7 536.6 1004.4 536.9 1008.1 537.3 1011.8 537.6 1015.5 538.0 1019.3 538.4 1023.0 538.9 1026.7 539.3 1030.4 539.8 1034.1 540.2 1037.8 540.7 1041.5 541.3 1045.2 541.8 1048.9 542.4 1052.7 543.0 1056.6 543.6 1060.6 544.2 1064.4 544.9 1067.9 545.5 1071.1 546.1 1073.8 546.8 1076.2 547.4 1078.3 548.0 1080.2 548.6 1082.0 549.2 1083.9 549.7 1085.7 550.2 1087.5 550.6 1089.1 550.9 1090.7 551.3 1092.3 551.7 1094.0 552.1 1095.8 552.6 1097.6 553.2 1099.4 553.8 1101.2 554.3 1102.9 554.9 1104.4 555.4 1105.8 555.9 1107.0 556.3 1108.1 556.7 1109.2 557.0 1110.3 557.4 1111.4 557.8 M808.5 557.8 808.6 559.6 808.7 561.4 808.8 563.2 808.9 565.0 809.0 566.7 809.2 568.3 809.4 569.8 809.7 571.2 810.0 572.5 810.3 573.7 810.7 574.9 811.0 576.0 811.3 577.1 811.7 578.0 812.0 579.0 812.4 579.9 812.8 580.8 813.3 581.8 813.8 582.7 814.3 583.6 814.9 584.6 815.5 585.6 816.1 586.7 816.7 588.0 817.3 589.4 818.0 591.1 818.7 592.8 819.4 594.6 820.2 596.4 821.1 598.0 822.1 599.6 823.1 601.1 824.2 602.6 825.4 604.1 826.6 605.6 827.8 607.1 829.1 608.7 830.4 610.3 831.8 611.8 833.2 613.4 834.6 615.0 836.1 616.5 837.6 618.0 839.0 619.4 840.5 620.9 842.0 622.3 843.7 623.8 845.6 625.3 847.8 627.1 850.3 628.9 852.9 630.8 855.5 632.7 857.9 634.4 860.0 635.9 861.7 637.1 862.9 638.0 864.1 638.8 865.2 639.6 866.6 640.4 868.3 641.3 870.4 642.5 872.8 643.7 875.4 645.0 878.1 646.3 881.0 647.6 883.9 648.6 887.0 649.6 890.2 650.4 893.5 651.2 896.9 651.9 900.4 652.5 903.9 652.9 907.5 653.3 911.1 653.5 914.8 653.6 918.5 653.6 922.3 653.6 926.0 653.6 929.8 653.6 933.8 653.5 937.8 653.4 941.6 653.2 945.2 653.1 948.3 652.8 950.7 652.6 952.6 652.3 954.2 652.0 955.7 651.7 957.6 651.2 960.0 650.7 963.1 650.1 966.6 649.4 970.4 648.6 974.4 647.8 978.4 646.9 982.2 645.9 985.9 645.0 989.6 644.0 993.3 643.0 997.0 641.9 1000.7 640.8 1004.4 639.5 1008.1 638.2 1011.8 636.7 1015.5 635.2 1019.3 633.6 1023.0 631.9 1026.7 630.1 1030.4 628.3 1034.1 626.4 1037.8 624.5 1041.5 622.4 1045.2 620.3 1048.9 618.2 1052.7 615.8 1056.6 613.4 1060.6 610.9 1064.4 608.4 1067.9 605.9 1071.1 603.4 1073.8 601.0 1076.2 598.5 1078.3 596.0 1080.2 593.6 1082.0 591.4 1083.9 589.3 1085.7 587.5 1087.5 586.0 1089.1 584.6 1090.7 583.2 1092.3 581.7 1094.0 580.0 1095.8 578.1 1097.6 575.9 1099.4 573.6 1101.2 571.3 1102.9 569.2 1104.4 567.2 1105.8 565.4 1107.0 563.8 1108.1 562.3 1109.2 560.8 1110.3 559.3 1111.4 557.8 M808.5 557.8 808.6 559.5 808.7 561.3 808.8 563.1 808.9 564.9 809.0 566.5 809.2 568.1 809.4 569.5 809.7 570.9 810.0 572.1 810.3 573.3 810.7 574.5 811.0 575.6 811.3 576.6 811.7 577.6 812.0 578.5 812.4 579.4 812.8 580.3 813.3 581.2 813.8 582.1 814.3 583.1 814.9 584.0 815.5 585.0 816.1 586.0 816.7 587.3 817.3 588.7 818.0 590.3 818.7 592.0 819.4 593.8 820.2 595.5 821.1 597.1 822.1 598.6 823.1 600.1 824.2 601.6 825.4 603.1 826.6 604.5 827.8 606.0 829.1 607.5 830.4 609.1 831.8 610.6 833.2 612.2 834.6 613.7 836.1 615.2 837.6 616.6 839.0 618.0 840.5 619.4 842.0 620.8 843.7 622.3 845.6 623.8 847.8 625.5 850.3 627.3 852.9 629.1 855.5 631.0 857.9 632.6 860.0 634.1 861.7 635.2 862.9 636.2 864.1 637.0 865.2 637.7 866.6 638.5 868.3 639.4 870.4 640.5 872.8 641.8 875.4 643.0 878.1 644.3 881.0 645.5 883.9 646.5 887.0 647.4 890.2 648.3 893.5 649.0 896.9 649.7 900.4 650.3 903.9 650.7 907.5 651.1 911.1 651.3 914.8 651.4 918.5 651.4 922.3 651.4 926.0 651.4 929.8 651.4 933.8 651.3 937.8 651.2 941.6 651.0 945.2 650.9 948.3 650.7 950.7 650.4 952.6 650.2 954.2 649.9 955.7 649.5 957.6 649.1 960.0 648.6 963.1 648.0 966.6 647.3 970.4 646.5 974.4 645.7 978.4 644.8 982.2 643.9 985.9 643.0 989.6 642.0 993.3 641.1 997.0 640.0 1000.7 638.9 1004.4 637.6 1008.1 636.3 1011.8 634.9 1015.5 633.4 1019.3 631.8 1023.0 630.2 1026.7 628.5 1030.4 626.7 1034.1 624.9 1037.8 622.9 1041.5 621.0 1045.2 618.9 1048.9 616.8 1052.7 614.5 1056.6 612.1 1060.6 609.7 1064.4 607.2 1067.9 604.7 1071.1 602.4 1073.8 600.0 1076.2 597.5 1078.3 595.1 1080.2 592.8 1082.0 590.6 1083.9 588.6 1085.7 586.9 1087.5 585.3 1089.1 584.0 1090.7 582.6 1092.3 581.2 1094.0 579.5 1095.8 577.6 1097.6 575.5 1099.4 573.2 1101.2 571.0 1102.9 568.9 1104.4 567.0 1105.8 565.2 1107.0 563.7 1108.1 562.2 1109.2 560.7 1110.3 559.3 1111.4 557.8 M808.5 557.8 808.6 559.3 808.7 560.9 808.8 562.5 808.9 564.1 809.0 565.5 809.2 566.9 809.4 568.2 809.7 569.4 810.0 570.5 810.3 571.6 810.7 572.6 811.0 573.6 811.3 574.5 811.7 575.3 812.0 576.1 812.4 576.9 812.8 577.7 813.3 578.5 813.8 579.4 814.3 580.2 814.9 581.0 815.5 581.9 816.1 582.8 816.7 583.9 817.3 585.2 818.0 586.6 818.7 588.1 819.4 589.7 820.2 591.2 821.1 592.6 822.1 594.0 823.1 595.3 824.2 596.6 825.4 597.9 826.6 599.2 827.8 600.5 829.1 601.8 830.4 603.2 831.8 604.6 833.2 605.9 834.6 607.3 836.1 608.6 837.6 609.9 839.0 611.1 840.5 612.4 842.0 613.6 843.7 614.9 845.6 616.2 847.8 617.7 850.3 619.3 852.9 621.0 855.5 622.6 857.9 624.1 860.0 625.4 861.7 626.4 862.9 627.2 864.1 627.9 865.2 628.6 866.6 629.3 868.3 630.1 870.4 631.1 872.8 632.2 875.4 633.3 878.1 634.4 881.0 635.5 883.9 636.4 887.0 637.2 890.2 637.9 893.5 638.6 896.9 639.2 900.4 639.7 903.9 640.1 907.5 640.4 911.1 640.6 914.8 640.7 918.5 640.7 922.3 640.7 926.0 640.7 929.8 640.7 933.8 640.6 937.8 640.5 941.6 640.4 945.2 640.2 948.3 640.0 950.7 639.8 952.6 639.6 954.2 639.3 955.7 639.0 957.6 638.7 960.0 638.2 963.1 637.7 966.6 637.1 970.4 636.4 974.4 635.6 978.4 634.9 982.2 634.1 985.9 633.3 989.6 632.4 993.3 631.5 997.0 630.6 1000.7 629.6 1004.4 628.5 1008.1 627.3 1011.8 626.1 1015.5 624.8 1019.3 623.4 1023.0 621.9 1026.7 620.4 1030.4 618.8 1034.1 617.2 1037.8 615.5 1041.5 613.7 1045.2 611.9 1048.9 610.0 1052.7 608.0 1056.6 605.9 1060.6 603.8 1064.4 601.6 1067.9 599.4 1071.1 597.3 1073.8 595.1 1076.2 593.0 1078.3 590.9 1080.2 588.8 1082.0 586.9 1083.9 585.1 1085.7 583.5 1087.5 582.2 1089.1 581.0 1090.7 579.8 1092.3 578.5 1094.0 577.0 1095.8 575.3 1097.6 573.4 1099.4 571.5 1101.2 569.5 1102.9 567.6 1104.4 565.9 1105.8 564.4 1107.0 563.0 1108.1 561.7 1109.2 560.4 1110.3 559.1 1111.4 557.8 M808.5 557.8 808.6 559.1 808.7 560.3 808.8 561.6 808.9 562.9 809.0 564.1 809.2 565.2 809.4 566.2 809.7 567.2 810.0 568.1 810.3 568.9 810.7 569.8 811.0 570.5 811.3 571.3 811.7 572.0 812.0 572.6 812.4 573.3 812.8 573.9 813.3 574.6 813.8 575.3 814.3 575.9 814.9 576.6 815.5 577.3 816.1 578.1 816.7 578.9 817.3 580.0 818.0 581.1 818.7 582.3 819.4 583.6 820.2 584.8 821.1 586.0 822.1 587.1 823.1 588.1 824.2 589.2 825.4 590.2 826.6 591.3 827.8 592.4 829.1 593.4 830.4 594.5 831.8 595.7 833.2 596.8 834.6 597.9 836.1 598.9 837.6 600.0 839.0 601.0 840.5 602.0 842.0 603.0 843.7 604.0 845.6 605.1 847.8 606.3 850.3 607.6 852.9 608.9 855.5 610.2 857.9 611.4 860.0 612.5 861.7 613.3 862.9 614.0 864.1 614.5 865.2 615.1 866.6 615.6 868.3 616.3 870.4 617.1 872.8 618.0 875.4 618.9 878.1 619.8 881.0 620.7 883.9 621.4 887.0 622.1 890.2 622.7 893.5 623.2 896.9 623.7 900.4 624.1 903.9 624.4 907.5 624.7 911.1 624.8 914.8 624.9 918.5 624.9 922.3 624.9 926.0 624.9 929.8 624.9 933.8 624.8 937.8 624.8 941.6 624.6 945.2 624.5 948.3 624.4 950.7 624.2 952.6 624.0 954.2 623.8 955.7 623.6 957.6 623.3 960.0 622.9 963.1 622.4 966.6 622.0 970.4 621.4 974.4 620.8 978.4 620.2 982.2 619.5 985.9 618.9 989.6 618.2 993.3 617.5 997.0 616.7 1000.7 615.9 1004.4 615.0 1008.1 614.1 1011.8 613.1 1015.5 612.0 1019.3 610.9 1023.0 609.7 1026.7 608.5 1030.4 607.2 1034.1 605.9 1037.8 604.5 1041.5 603.1 1045.2 601.6 1048.9 600.1 1052.7 598.5 1056.6 596.8 1060.6 595.0 1064.4 593.2 1067.9 591.5 1071.1 589.7 1073.8 588.0 1076.2 586.3 1078.3 584.6 1080.2 582.9 1082.0 581.3 1083.9 579.9 1085.7 578.6 1087.5 577.5 1089.1 576.6 1090.7 575.6 1092.3 574.6 1094.0 573.4 1095.8 572.0 1097.6 570.5 1099.4 568.9 1101.2 567.3 1102.9 565.8 1104.4 564.4 1105.8 563.1 1107.0 562.0 1108.1 560.9 1109.2 559.9 1110.3 558.9 1111.4 557.8 M808.5 557.8 808.6 558.7 808.7 559.6 808.8 560.5 808.9 561.3 809.0 562.2 809.2 562.9 809.4 563.7 809.7 564.3 810.0 565.0 810.3 565.6 810.7 566.1 811.0 566.7 811.3 567.2 811.7 567.7 812.0 568.1 812.4 568.6 812.8 569.0 813.3 569.5 813.8 570.0 814.3 570.4 814.9 570.9 815.5 571.4 816.1 571.9 816.7 572.5 817.3 573.3 818.0 574.1 818.7 574.9 819.4 575.8 820.2 576.6 821.1 577.5 822.1 578.2 823.1 579.0 824.2 579.7 825.4 580.4 826.6 581.2 827.8 581.9 829.1 582.7 830.4 583.4 831.8 584.2 833.2 585.0 834.6 585.7 836.1 586.5 837.6 587.2 839.0 587.9 840.5 588.6 842.0 589.3 843.7 590.0 845.6 590.8 847.8 591.6 850.3 592.5 852.9 593.5 855.5 594.4 857.9 595.2 860.0 595.9 861.7 596.5 862.9 597.0 864.1 597.4 865.2 597.7 866.6 598.1 868.3 598.6 870.4 599.2 872.8 599.8 875.4 600.4 878.1 601.1 881.0 601.6 883.9 602.2 887.0 602.6 890.2 603.0 893.5 603.4 896.9 603.8 900.4 604.0 903.9 604.3 907.5 604.4 911.1 604.5 914.8 604.6 918.5 604.6 922.3 604.6 926.0 604.6 929.8 604.6 933.8 604.6 937.8 604.5 941.6 604.4 945.2 604.3 948.3 604.2 950.7 604.1 952.6 604.0 954.2 603.8 955.7 603.7 957.6 603.5 960.0 603.2 963.1 602.9 966.6 602.5 970.4 602.2 974.4 601.7 978.4 601.3 982.2 600.9 985.9 600.4 989.6 599.9 993.3 599.4 997.0 598.9 1000.7 598.3 1004.4 597.7 1008.1 597.1 1011.8 596.3 1015.5 595.6 1019.3 594.8 1023.0 594.0 1026.7 593.1 1030.4 592.2 1034.1 591.3 1037.8 590.4 1041.5 589.4 1045.2 588.4 1048.9 587.3 1052.7 586.2 1056.6 585.0 1060.6 583.7 1064.4 582.5 1067.9 581.3 1071.1 580.1 1073.8 578.9 1076.2 577.7 1078.3 576.5 1080.2 575.3 1082.0 574.2 1083.9 573.2 1085.7 572.3 1087.5 571.6 1089.1 570.9 1090.7 570.2 1092.3 569.5 1094.0 568.7 1095.8 567.7 1097.6 566.6 1099.4 565.5 1101.2 564.4 1102.9 563.4 1104.4 562.4 1105.8 561.5 1107.0 560.7 1108.1 560.0 1109.2 559.3 1110.3 558.5 1111.4 557.8 M808.5 557.8 808.6 558.3 808.7 558.7 808.8 559.2 808.9 559.7 809.0 560.1 809.2 560.5 809.4 560.9 809.7 561.3 810.0 561.6 810.3 561.9 810.7 562.3 811.0 562.5 811.3 562.8 811.7 563.1 812.0 563.3 812.4 563.6 812.8 563.8 813.3 564.0 813.8 564.3 814.3 564.5 814.9 564.8 815.5 565.1 816.1 565.3 816.7 565.7 817.3 566.1 818.0 566.5 818.7 566.9 819.4 567.4 820.2 567.9 821.1 568.3 822.1 568.7 823.1 569.1 824.2 569.5 825.4 569.9 826.6 570.3 827.8 570.7 829.1 571.1 830.4 571.5 831.8 571.9 833.2 572.3 834.6 572.7 836.1 573.1 837.6 573.5 839.0 573.9 840.5 574.3 842.0 574.6 843.7 575.0 845.6 575.4 847.8 575.9 850.3 576.4 852.9 576.9 855.5 577.3 857.9 577.8 860.0 578.2 861.7 578.5 862.9 578.7 864.1 578.9 865.2 579.1 866.6 579.4 868.3 579.6 870.4 579.9 872.8 580.2 875.4 580.6 878.1 580.9 881.0 581.2 883.9 581.5 887.0 581.7 890.2 582.0 893.5 582.2 896.9 582.3 900.4 582.5 903.9 582.6 907.5 582.7 911.1 582.8 914.8 582.8 918.5 582.8 922.3 582.8 926.0 582.8 929.8 582.8 933.8 582.8 937.8 582.7 941.6 582.7 945.2 582.7 948.3 582.6 950.7 582.5 952.6 582.5 954.2 582.4 955.7 582.3 957.6 582.2 960.0 582.0 963.1 581.9 966.6 581.7 970.4 581.5 974.4 581.3 978.4 581.0 982.2 580.8 985.9 580.6 989.6 580.3 993.3 580.0 997.0 579.8 1000.7 579.5 1004.4 579.1 1008.1 578.8 1011.8 578.4 1015.5 578.0 1019.3 577.6 1023.0 577.1 1026.7 576.7 1030.4 576.2 1034.1 575.7 1037.8 575.2 1041.5 574.7 1045.2 574.1 1048.9 573.5 1052.7 572.9 1056.6 572.3 1060.6 571.7 1064.4 571.0 1067.9 570.3 1071.1 569.7 1073.8 569.1 1076.2 568.4 1078.3 567.8 1080.2 567.2 1082.0 566.6 1083.9 566.0 1085.7 565.6 1087.5 565.2 1089.1 564.8 1090.7 564.4 1092.3 564.0 1094.0 563.6 1095.8 563.1 1097.6 562.5 1099.4 561.9 1101.2 561.3 1102.9 560.8 1104.4 560.2 1105.8 559.8 1107.0 559.4 1108.1 559.0 1109.2 558.6 1110.3 558.2 1111.4 557.8" stroke="#f6f6f6" stroke-width="1" fill="none" shape-rendering="crispEdges"/><rect x="806" y="557" width="305.5" height="2" fill="#ffffff"/>
<g stroke="#23252b" stroke-width="1" fill="#ececec"><rect x="1833.8" y="160" width="15.4" height="4.2"/><path d="M1867 154V150.8H1879V163H1876.5"/><path d="M1864 154.3H1876.3V166H1864ZM1867.2 157.5V162.8H1872.9V157.5Z" fill-rule="evenodd"/><path d="M1893.4 151.8H1898.6L1900.9 155.2L1903.2 151.8H1908.3L1903.6 158L1908.3 164.2H1903.2L1900.9 160.8L1898.6 164.2H1893.4L1898.1 158Z"/></g><circle cx="1824.2" cy="270.3" r="74.2" fill="none" stroke="#7e838c" stroke-opacity="0.57" stroke-width="19.4"/><text transform="translate(1812.5 191.4) rotate(90)" text-anchor="middle" font-family="Liberation Sans,sans-serif" font-size="30.5" font-weight="700" fill="#d6d6d6" stroke="#33363f" stroke-opacity="0.5" stroke-width="0.8" paint-order="stroke">W</text><text transform="translate(1733.8 269.8) rotate(90)" text-anchor="middle" font-family="Liberation Sans,sans-serif" font-size="30.5" font-weight="700" fill="#d6d6d6" stroke="#33363f" stroke-opacity="0.5" stroke-width="0.8" paint-order="stroke">N</text><text transform="translate(1812.5 348.7) rotate(90)" text-anchor="middle" font-family="Liberation Sans,sans-serif" font-size="30.5" font-weight="700" fill="#d6d6d6" stroke="#33363f" stroke-opacity="0.5" stroke-width="0.8" paint-order="stroke">E</text><text transform="translate(1891 269.8) rotate(90)" text-anchor="middle" font-family="Liberation Sans,sans-serif" font-size="30.5" font-weight="700" fill="#d6d6d6" stroke="#33363f" stroke-opacity="0.5" stroke-width="0.8" paint-order="stroke">S</text><rect x="1794.2" y="240.3" width="59.5" height="59.4" fill="#b3b3b3"/><rect x="1805" y="251.2" width="38" height="37.5" fill="#959ca9"/><text transform="translate(1830.3 297) rotate(-90)" font-family="Liberation Sans,sans-serif" font-size="16.5" font-weight="700" fill="#434954" stroke="#434954" stroke-width="0.35" textLength="55" lengthAdjust="spacingAndGlyphs">BOTTOM</text><path d="M1817.2 224.7H1831.2L1824.2 231.7Z" fill="#e6e6e6"/><path d="M1778.7 263.3V276.9L1785.8 270.1Z" fill="#e6e6e6"/><path d="M1869.6 263.3V276.9L1862.5 270.1Z" fill="#e6e6e6"/><path d="M1816.7 315.3H1830.5L1823.6 308.3Z" fill="#a9d5ff"/><path d="M1749.5 183L1758.5 191.5H1756V199H1751.5V193.5H1747.5V199H1743V191.5H1740.5Z" fill="#7c8089"/><path d="M1871.4 185.1L1877.3 180.3V184.2C1886 183.5 1893 186 1897.8 190L1893.2 193.8C1889 190.2 1884 189 1877.3 189.3V192.2Z" fill="#7c8089"/><path d="M1908.9 224L1902 218.3L1906 217.6C1906 210 1903.5 204.5 1899.9 199.8L1904.7 196.8C1909 202.5 1911.8 209 1911.7 217L1915.3 216.6Z" fill="#7c8089"/><path d="M1896.2 340H1909.2V342H1896.2ZM1896.5 343.3H1909L1902.7 350.2Z" fill="#7c8089"/><rect x="1790" y="374" width="67.6" height="23.6" rx="4.5" fill="#cacce1" stroke="#a6a8c3" stroke-width="1.6"/><text x="1795.8" y="390" font-family="Liberation Sans,sans-serif" font-size="14" fill="#3b3b3b" textLength="34.5" lengthAdjust="spacingAndGlyphs">WCS</text><path d="M1840 382.7H1851.6L1845.8 389Z" fill="#e4e5f0" stroke="#9a9cb0" stroke-width="0.9"/>
</svg>
<div class="abs" style="left:7.5px;top:155px;width:10px;height:1.2px;background:#eaeaea"></div>
<div class="abs" style="left:0;top:977px;width:1920px;height:1px;background:#1f232b"></div><div class="abs" style="left:0;top:978px;width:1920px;height:2px;background:#383f4a"></div>
<svg class="i" id="layouttabs" style="left:0;top:979px" width="400" height="41" viewBox="0 979 400 41">
<path d="M190 980H214V1005H190Z" fill="#2e3542"/>
<path d="M198 980C205.425 980 207.075 1005 214.5 1005H284.5C291.925 1005 293.575 980 301 980Z" fill="#343b49"/>
<path d="M96 980C103.425 980 105.075 1005 112.5 1005H187.0C194.425 1005 196.075 980 203.5 980Z" fill="#343b49"/>
<path d="M111.5 980C104 984 100 1001 94 1005" stroke="#2b313d" stroke-width="1.2" fill="none"/>
<path d="M8 980C15.425 980 17.075000000000003 1005 24.5 1005H94.5C101.925 1005 103.575 980 111 980Z" fill="#3b4453"/>
<path d="M319.5 980.5H338.5C338.5 992 335 1001 326 1001H306.5C306.5 990 310 981.5 319.5 980.5Z" fill="#343b49"/>
<path d="M323.5 986V998M317.3 992H329.7" stroke="#cfcfcf" stroke-width="2.4"/>
</svg>
<svg class="i" id="statusbar" style="left:960px;top:980px" width="960" height="40" viewBox="960 980 960 40">
<rect x="974" y="982.2" width="72" height="35.6" fill="#3b4453" />
<rect x="1052.3" y="982.2" width="95.8" height="35.6" fill="#3b4453" />
<rect x="1154" y="982.2" width="35.6" height="35.6" fill="#3b4453" />
<rect x="1192.1" y="982.2" width="156.1" height="35.6" fill="#3b4453" />
<rect x="1350" y="982.2" width="95.8" height="35.6" fill="#3b4453" />
<rect x="1452.3" y="982.2" width="157.8" height="35.6" fill="#3b4453" />
<rect x="1616" y="982.2" width="59.8" height="35.6" fill="#3b4453" />
<rect x="1677.9" y="982.2" width="36.1" height="35.6" fill="#3b4453" />
<rect x="1719.9" y="982.2" width="35.9" height="35.6" fill="#3b4453" />
<rect x="1760" y="982.2" width="84.2" height="35.6" fill="#3b4453" />
<rect x="1848" y="982.2" width="72" height="35.6" fill="#3b4453" />
<rect x="1053" y="983" width="34" height="33.9" fill="#5f8fc3" />
<rect x="1089" y="983" width="34" height="33.9" fill="#5f8fc3" />
<rect x="1154.8" y="983" width="34.2" height="33.9" fill="#5f8fc3" />
<rect x="1387" y="983" width="34.1" height="33.9" fill="#5f8fc3" />
<rect x="1453" y="983" width="34.2" height="33.9" fill="#5f8fc3" />
<path d="M1063.5 988V1011M1069.5 988V1011M1075.5 988V1011M1058 993.5H1081M1058 999.5H1081M1058 1005.5H1081" stroke="#ffffff" stroke-width="1.5" fill="none"/>
<rect x="1096.9" y="990.9" width="3.2" height="3.2" fill="#ffffff" />
<rect x="1096.9" y="997.9" width="3.2" height="3.2" fill="#ffffff" />
<rect x="1096.9" y="1004.9" width="3.2" height="3.2" fill="#ffffff" />
<rect x="1103.9" y="990.9" width="3.2" height="3.2" fill="#ffffff" />
<rect x="1103.9" y="997.9" width="3.2" height="3.2" fill="#ffffff" />
<rect x="1103.9" y="1004.9" width="3.2" height="3.2" fill="#ffffff" />
<rect x="1110.9" y="990.9" width="3.2" height="3.2" fill="#ffffff" />
<rect x="1110.9" y="997.9" width="3.2" height="3.2" fill="#ffffff" />
<rect x="1110.9" y="1004.9" width="3.2" height="3.2" fill="#ffffff" />
<path d="M1129.8 997H1141.9L1135.85 1003.3Z" fill="#d4d4d4"/>
<path d="M1165.5 991V1002M1160 996.5H1171" stroke="#ffffff" stroke-width="1.5" fill="none"/><rect x="1169" y="1003.3" width="15.3" height="5.9" fill="#ffffff" /><rect x="1170.6" y="1004.6" width="1.6" height="3.4" fill="#5f8fc3" />
<path d="M1198.6 988.3V1011.6H1222M1198.6 1005.4H1205.6V1011.6" stroke="#d4d4d4" stroke-width="1.3" fill="none"/>
<circle cx="1243.5" cy="1000.5" r="9.3" stroke="#d4d4d4" stroke-width="1.3" fill="none"/><path d="M1258 1000.5H1243L1254 990" stroke="#d4d4d4" stroke-width="1.3" fill="none"/>
<path d="M1269.8 996.8H1282L1275.9 1003.3Z" fill="#d4d4d4"/>
<path d="M1297.2 990L1314.9 1007.8" stroke="#e26d6d" stroke-width="1.2"/><path d="M1306.6 988V1010.2" stroke="#55da6e" stroke-width="1.4"/><rect x="1304.4" y="997.2" width="3.8" height="3.8" fill="#2d3340" stroke="#ffffff" stroke-width="1"/>
<path d="M1329.8 996.8H1342.3L1336.05 1003.3Z" fill="#d4d4d4"/>
<path d="M1380 1008.6H1356L1374 991" stroke="#d4d4d4" stroke-width="1.3" fill="none"/><rect x="1363" y="998.1" width="4.2" height="4.2" fill="#d4d4d4" />
<rect x="1395.4" y="991.4" width="20.6" height="20.2" stroke="#ffffff" stroke-width="1.5" fill="none"/><rect x="1392.2" y="988.5" width="6.4" height="6.2" stroke="#ffffff" stroke-width="1.3" fill="#5f8fc3"/>
<path d="M1427.8 996.8H1440L1433.9 1003.3Z" fill="#d4d4d4"/>
<path d="M1468.75 988.3L1472.35 999.6L1471.35 1001.2L1479.25 1012L1470.95 1008.2L1468.75 1006.2L1466.55 1008.2L1458.25 1012L1466.15 1001.2L1465.15 999.6Z" fill="#ffffff"/><circle cx="1477.5" cy="993.5" r="3.9" stroke="#ffffff" stroke-width="1.2" fill="none"/>
<path d="M1504.6 988.3L1508.1999999999998 999.6L1507.1999999999998 1001.2L1515.1 1012L1506.8 1008.2L1504.6 1006.2L1502.3999999999999 1008.2L1494.1 1012L1502.0 1001.2L1501.0 999.6Z" fill="#d6d6d6"/><path d="M1515.4 988.5L1511 994.3H1513.6L1510.5 999.5L1517.2 992.6H1514.2Z" fill="#d6d6d6"/>
<path d="M1541.4 988.3L1545.0 999.6L1544.0 1001.2L1551.9 1012L1543.6000000000001 1008.2L1541.4 1006.2L1539.2 1008.2L1530.9 1012L1538.8000000000002 1001.2L1537.8000000000002 999.6Z" fill="#8f949f"/>
<path d="M1592 996.8H1603.9L1597.95 1003.3Z" fill="#9499a3"/>
<path d="M1646.0 997.9 L1646.0 1002.1 L1642.8 1002.0 L1641.6 1004.8 L1644.0 1007.0 L1641.0 1010.0 L1638.8 1007.6 L1636.0 1008.8 L1636.1 1012.0 L1631.9 1012.0 L1632.0 1008.8 L1629.2 1007.6 L1627.0 1010.0 L1624.0 1007.0 L1626.4 1004.8 L1625.2 1002.0 L1622.0 1002.1 L1622.0 997.9 L1625.2 998.0 L1626.4 995.2 L1624.0 993.0 L1627.0 990.0 L1629.2 992.4 L1632.0 991.2 L1631.9 988.0 L1636.1 988.0 L1636.0 991.2 L1638.8 992.4 L1641.0 990.0 L1644.0 993.0 L1641.6 995.2 L1642.8 998.0Z M1638.2 1000A4.2 4.2 0 1 0 1629.8 1000A4.2 4.2 0 1 0 1638.2 1000Z" fill="#dcdcdc" fill-rule="evenodd"/>
<path d="M1657.7 996.8H1670.1L1663.9 1003.3Z" fill="#d4d4d4"/>
<rect x="1693.9" y="988" width="3.1" height="23.2" fill="#e4e4e4" /><rect x="1683.8" y="997.9" width="23.3" height="3.1" fill="#e4e4e4" />
<g stroke="#e0e0e0" stroke-width="1.2" fill="none"><rect x="1726.1" y="988.5" width="9.7" height="9.2"/><circle cx="1744.4" cy="998.4" r="5.2"/><path d="M1735.5 1003L1741 1011.6H1729.8Z"/></g>
<path d="M1764 982H1786L1793.1 989V1007.3H1764Z" fill="#336aa8"/><path d="M1786 982L1793.1 989H1786Z" fill="#8fb5dd"/><path d="M1786 982V989H1793.1" fill="#5b8fcb" opacity="0.6"/>
<path d="M1771.5 982V1003M1764 989.5H1787" stroke="#e8f0fa" stroke-width="1.6"/><circle cx="1771.5" cy="989.5" r="2.6" fill="#336aa8" stroke="#e8f0fa" stroke-width="1.4"/>
<path d="M1764 1002.6H1777L1780.8 1005L1777.5 1008.5L1780.8 1013.5H1764Z" fill="#f5b820"/>
<path d="M1778.5 1008.8L1786 1015.5L1798.6 1003.2" stroke="#4cae54" stroke-width="4.2" fill="none"/>
<path d="M1814.5 996.5A9.6 9.6 0 1 1 1832.5 1003" stroke="#dcdcdc" stroke-width="1.6" fill="none"/><path d="M1811.8 992.5L1817.8 993.5L1813.2 998.6Z" fill="#dcdcdc"/><path d="M1822.7 992.4V999.7H1827.8" stroke="#dcdcdc" stroke-width="1.2" fill="none"/>
<path d="M1810.4 998.6H1818.5L1821.6 1001.7V1011.6H1810.4Z" fill="#2f62a6" stroke="#f2f2f2" stroke-width="0.9"/><path d="M1811 1006.8H1816L1821 1010V1011.2H1811Z" fill="#f5b820"/><path d="M1813.3 999V1006M1811 1002H1817" stroke="#f2f2f2" stroke-width="0.8"/>
<circle cx="1828.5" cy="1006.5" r="5.5" fill="#5aaee6"/><path d="M1828.5 1005.3V1009.8" stroke="#fff" stroke-width="1.4"/><circle cx="1828.5" cy="1003.4" r="0.9" fill="#fff"/>
<rect x="1854.9" y="991.9" width="22.2" height="15.3" stroke="#e0e0e0" stroke-width="1.3" fill="none"/><path d="M1875.3 993.6L1870.5 998.4M1875.6 993.4H1871M1875.6 993.4V998M1856.8 1005.4L1861.6 1000.6M1856.5 1005.6H1861M1856.5 1005.6V1001" stroke="#e0e0e0" stroke-width="1.4" fill="none"/>
<rect x="1890" y="989" width="24" height="3.1" fill="#e4e4e4" />
<rect x="1890" y="998" width="24" height="3.1" fill="#e4e4e4" />
<rect x="1890" y="1007" width="24" height="3.1" fill="#e4e4e4" />
</svg>
<div id="taskbar" class="abs" style="left:0;top:1020px;width:1920px;height:60px;background:#24282a"></div>
<div id="searchbox" class="abs" style="left:72px;top:1020px;width:516px;height:60px;background:#f2f2f2;border:2px solid #c6c6c6"></div>
<div class="abs" style="left:965px;top:1020px;width:73px;height:57px;background:linear-gradient(90deg,#4e5253,#5a5e5f 50%,#4e5253)"></div>
<div class="abs" style="left:965px;top:1077px;width:73px;height:3px;background:#9ed3fa"></div>
<div class="abs" style="left:746px;top:1077px;width:47.3px;height:3px;background:#a5d4f5"></div><div class="abs" style="left:793.3px;top:1077px;width:13.7px;height:3px;background:#7fa9c8"></div>
<div class="abs" style="left:1912.5px;top:1020px;width:1.5px;height:60px;background:#858585"></div>
<svg class="i" id="taskicons" style="left:0;top:1020px" width="1920" height="60" viewBox="0 1020 1920 60">
<defs>
<linearGradient id="glb" x1="0.3" y1="0" x2="0.6" y2="1"><stop offset="0" stop-color="#14b4f5"/><stop offset="0.55" stop-color="#5a7ff5"/><stop offset="1" stop-color="#7d14c8"/></linearGradient>
<linearGradient id="hrt" x1="0" y1="0" x2="1" y2="0.3"><stop offset="0" stop-color="#e8119f"/><stop offset="0.6" stop-color="#f21cae"/><stop offset="1" stop-color="#ff8fc0"/></linearGradient>
<radialGradient id="ffx" cx="0.6" cy="0.25" r="0.9"><stop offset="0" stop-color="#fff14f"/><stop offset="0.35" stop-color="#ffa629"/><stop offset="0.7" stop-color="#ff4a36"/><stop offset="1" stop-color="#e8127f"/></radialGradient>
<radialGradient id="ffp" cx="0.6" cy="0.3" r="0.8"><stop offset="0" stop-color="#b04df2"/><stop offset="1" stop-color="#5533c8"/></radialGradient>
<linearGradient id="tb" x1="0" y1="0" x2="1" y2="1"><stop offset="0" stop-color="#2aa4f4"/><stop offset="0.5" stop-color="#1a6fd6"/><stop offset="1" stop-color="#16309a"/></linearGradient>
<radialGradient id="lol" cx="0.5" cy="0.5" r="0.6"><stop offset="0" stop-color="#22aebd"/><stop offset="0.75" stop-color="#137184"/><stop offset="1" stop-color="#0b4656"/></radialGradient>
<linearGradient id="lg" x1="0" y1="0" x2="0" y2="1"><stop offset="0" stop-color="#e3b64b"/><stop offset="1" stop-color="#a9761f"/></linearGradient>
<linearGradient id="sun" x1="0" y1="0" x2="0.6" y2="1"><stop offset="0" stop-color="#ffe259"/><stop offset="1" stop-color="#f99a14"/></linearGradient>
<linearGradient id="acbg" x1="0" y1="0" x2="1" y2="1"><stop offset="0" stop-color="#f7d9d2"/><stop offset="1" stop-color="#fff6f3"/></linearGradient>
<linearGradient id="ag3" x1="0" y1="0" x2="1" y2="0"><stop offset="0" stop-color="#c3161c"/><stop offset="0.5" stop-color="#e02a2e"/><stop offset="1" stop-color="#b01217"/></linearGradient>
</defs>
<path d="M24 1041.2L33.6 1039.9V1049.3H24ZM34.8 1039.7L48.4 1037.8V1049.3H34.8ZM24 1050.5H33.6V1059.9L24 1058.6ZM34.8 1050.5H48.4V1062L34.8 1060.1Z" fill="#ffffff"/>
<circle cx="105" cy="1047.3" r="7.6" stroke="#1c1c1c" stroke-width="1.7" fill="none"/><path d="M99.6 1052.8L90.6 1061.2" stroke="#1c1c1c" stroke-width="1.8"/>
<path d="M481.5 1029.8Q483 1034.5 488.7 1035.3Q484 1036.8 483.2 1042Q481.8 1037.5 476.3 1036.5Q480.8 1035 481.5 1029.8Z" fill="#e27ff5" stroke="#e27ff5" stroke-width="1.5" stroke-linejoin="round"/>
<circle cx="492" cy="1061.9" r="3.1" fill="#6dd3e8"/><circle cx="550.4" cy="1036.4" r="3.3" fill="#ffab00"/>
<circle cx="519" cy="1049.9" r="20.8" fill="url(#glb)"/>
<path d="M500.1 1040.3L503.7 1035.6L510 1031.5L515.2 1029.9L515.7 1033.5L512 1036.7L509 1038.2L505.8 1042.4L503.7 1043.4L501.7 1045L499.3 1044Z" fill="#1fe08c"/>
<path d="M505.8 1048.6L511 1048.1L517.8 1052.8L516.2 1057.5L513.1 1061.7L512.1 1066.9L510 1063.7L508.4 1056.5L505.8 1051.3Z" fill="#1fe08c"/>
<path d="M522.5 1045.5L524.6 1042.4L528.7 1040.3L532.9 1041.4L536.6 1042.4L538.6 1047L537.6 1051.3L535 1058.5L532.4 1060.6L530.8 1055.4L528.7 1050.2L524.1 1048.6Z" fill="#1fe08c"/>
<path d="M527.7 1032.5L532.9 1034.6L537.6 1039.8L532.9 1038.7L526.7 1036.7Z" fill="#3fe6a8"/>
<path d="M562.3 1068C555 1064 548.5 1057 550.3 1050.5C551.5 1046 557.5 1045 561.5 1050C563.5 1046.5 570.5 1045.8 574 1050C578 1055.5 571 1064 562.3 1068Z" fill="url(#hrt)"/>
<g stroke="#ffffff" stroke-width="1.3" fill="none"><rect x="612.5" y="1045.3" width="14.8" height="9.4"/><path d="M612.5 1038.2V1041.3H627.3V1038.2M612.5 1061V1057.6H627.3V1061M634.6 1038.2V1061"/></g><rect x="632.8" y="1044.8" width="3.6" height="3.6" fill="#ffffff"/>
<path d="M685 1038.5C685 1037.4 685.8 1036.7 686.8 1036.7H697.5L699.8 1038.9H715.3C716.4 1038.9 717.1 1039.7 717.1 1040.7V1042H685Z" fill="#e8a600"/><rect x="685" y="1038.9" width="32.1" height="23.3" rx="1.4" fill="#ffd766"/><path d="M685 1038.9H699.8L698 1041.9H685Z" fill="#e8a600"/>
<path d="M690.2 1052.6C690.2 1051.7 690.9 1051 691.8 1051H709.4C710.3 1051 711 1051.7 711 1052.6V1062.9H705.8V1056H696V1062.9H690.2Z" fill="#3a96dd"/>
<path d="M775.6 1066.6C766 1066.6 759 1059.5 759 1050.5C759 1045 761 1041 763.5 1038.2C763.6 1040 764.5 1041.5 765.5 1042.3C766.5 1039 768.5 1037.5 771.5 1037C770.5 1039 771 1040.8 772 1041.8C773.5 1040.2 776 1039.5 778 1039.6C776.5 1036.5 777.5 1033.5 780.5 1032C781.5 1035.5 785.5 1037.5 788 1040C788.5 1039 788.5 1038 788.2 1037C791.5 1040.5 792.8 1045.5 792.6 1050.5C792.3 1059.5 785.2 1066.6 775.6 1066.6Z" fill="url(#ffx)"/>
<circle cx="776.3" cy="1050.6" r="7.6" fill="url(#ffp)"/><path d="M764 1045C767 1042.5 771.5 1042.8 774.8 1045.8C772 1045.6 770.2 1046.6 769.4 1048.5C767.5 1046.5 765.5 1045.5 764 1045Z" fill="#ffb52e"/>
<path d="M851 1032C861 1032 869.2 1040 869.2 1050C869.2 1058 864.5 1064.5 857 1067.5C860 1065 861 1062.5 861 1060L840.5 1063C836 1060 833 1055.5 833 1050C833 1040 841 1032 851 1032Z" fill="url(#tb)"/>
<path d="M835.2 1050.5L838.5 1043.5L856 1045L861.3 1049V1060L857 1063.2L839 1060.5Z" fill="#f4f4f8"/><path d="M838.5 1043.5L845.5 1053L861 1049.2" stroke="#c9c9d4" stroke-width="0.9" fill="none"/><path d="M838.5 1043.5C840 1038 845 1034 851 1033.5C846.5 1036 844.5 1039.5 844 1043.9Z" fill="#2c8be8"/>
<circle cx="925.9" cy="1050.9" r="16.3" fill="#12181b"/><circle cx="925.9" cy="1050.9" r="14.4" fill="url(#lol)" stroke="#b8892c" stroke-width="2.2"/>
<path d="M913.9 1032.9H922.9V1062H939.4L936.6 1066.4H913.9L916 1062V1036.5Z" fill="url(#lg)" stroke="#12181b" stroke-width="1.2" stroke-linejoin="round"/>
<rect x="982.9" y="1031.9" width="36.2" height="36.2" fill="url(#acbg)"/>
<g transform="translate(982.7 1030.7) scale(0.663 0.673)"><defs><linearGradient id="tg" x1="0" y1="0" x2="1" y2="0"><stop offset="0" stop-color="#ba1e22"/><stop offset="0.5" stop-color="#cf2326"/><stop offset="1" stop-color="#e8292d"/></linearGradient><linearGradient id="tl" x1="0" y1="0" x2="0" y2="1"><stop offset="0" stop-color="#c02a2c"/><stop offset="1" stop-color="#ee7a7a"/></linearGradient><linearGradient id="tb" x1="0" y1="0" x2="0" y2="1"><stop offset="0" stop-color="#a32a30"/><stop offset="1" stop-color="#e08a8a"/></linearGradient></defs><path d="M22.8 7.3H32.7L46.9 45.6L44.6 48L39.4 47.7L34.75 35.8L20.7 37.9L18.2 46.7L15.6 48L11.4 47.7L9.1 45.6ZM28 12.4L23.6 28.3L33.7 23.6Z" fill="url(#tg)" fill-rule="evenodd"/><path d="M28 12.4L23.6 28.3L25.3 27.2L28.3 20.3Z" fill="url(#tb)"/><path d="M28 12.4L33.7 23.6L31.1 24.4L28 19.7Z" fill="#a8303a"/><path d="M18.3 33L37 29.4L38.7 35.2L34.75 35.8L20.7 37.9L16.3 38.7Z" fill="#9c2226"/><path d="M16.3 38.7L20.7 37.9L18.2 46.7L15.6 48L11.8 47.7Z" fill="url(#tl)"/><path d="M34.75 35.8L38.2 35.3L44.2 46.8L43.5 48L39.4 47.7Z" fill="url(#tl)"/></g>
<circle cx="1225.6" cy="1049.7" r="15.6" fill="#ffffff"/><circle cx="1225.6" cy="1049.7" r="12.9" fill="#1593d8"/>
<text x="1225" y="1059" text-anchor="middle" font-family="Liberation Sans,sans-serif" font-size="26" font-weight="700" fill="#ffffff">?</text>
<circle cx="1237.7" cy="1057" r="7.4" fill="#1593d8" stroke="#24282a" stroke-width="0.8"/><text x="1237.7" y="1061.6" text-anchor="middle" font-family="Liberation Sans,sans-serif" font-size="13" font-weight="700" fill="#ffffff">i</text>
<circle cx="1305.6" cy="1050.5" r="14" fill="url(#sun)"/><path d="M1305.5 1057.5C1302 1057.5 1301.5 1053 1305 1052.3C1305 1048 1310.5 1046 1313.3 1049.2C1316 1047.3 1319.5 1049.5 1318.8 1052.3C1322.5 1052.5 1322.8 1057.5 1319 1057.5Z" fill="#cfe4f6"/>
<path d="M1313.3 1037.3H1316.9L1316.1 1047.5H1314.1Z" fill="#e81224"/><circle cx="1315.1" cy="1050.6" r="1.7" fill="#e81224"/>
<path d="M1409 1053.6L1418.1 1044.7L1427.2 1053.6" stroke="#ffffff" stroke-width="1.4" fill="none"/>
<g stroke="#ffffff" stroke-width="1.2" fill="none"><rect x="1459.3" y="1044.9" width="10.4" height="10.4" rx="1.8"/><path d="M1469.7 1048.5L1474.6 1045.8V1054.4L1469.7 1051.7"/><path d="M1460.5 1041.2C1463.5 1039.2 1469 1039.2 1472 1041.2M1460.5 1058.8C1463.5 1060.8 1469 1060.8 1472 1058.8" stroke="#d0d0d0" stroke-width="1"/></g>
<path d="M1506.5 1058C1503 1058 1501.7 1055.8 1501.7 1053.8C1501.7 1051.3 1503.6 1049.6 1505.8 1049.4C1506.3 1045 1510 1042.1 1514 1042.1C1517.3 1042.1 1519.8 1043.9 1521 1046.5C1524 1046.3 1526.2 1048.6 1526.2 1051.2C1526.2 1055 1523.5 1058 1521 1058Z" fill="#b8b8b8"/><path d="M1503.5 1057C1507 1054.5 1511.5 1052 1516.4 1049.8L1525.3 1055C1524.5 1056.8 1523 1058 1521 1058H1506.5C1505.3 1058 1504.3 1057.6 1503.5 1057Z" fill="#ffffff"/><path d="M1505.8 1049.4C1508.5 1049 1512 1050.2 1516.4 1049.8C1513 1051.3 1508 1054 1503.5 1057C1502.3 1056 1501.7 1054.8 1501.7 1053.8C1501.7 1051.3 1503.6 1049.6 1505.8 1049.4Z" fill="#e2e2e2"/>
<rect x="1551.5" y="1044.3" width="21.2" height="12.2" stroke="#ffffff" stroke-width="1.3" fill="none"/><rect x="1573.3" y="1048" width="1.4" height="4.6" fill="#ffffff"/><rect x="1553.4" y="1046.2" width="11.8" height="8.4" fill="#ffffff"/>
<path d="M1599.6 1046.3H1603L1607.3 1042V1058.2L1603 1053.9H1599.6Z" stroke="#ffffff" stroke-width="1.2" fill="none" stroke-linejoin="miter"/><path d="M1610.5 1047.3C1612 1049 1612 1051.2 1610.5 1052.9" stroke="#ffffff" stroke-width="1.1" fill="none"/><path d="M1613.5 1044.3C1616.5 1047.5 1616.5 1052.7 1613.5 1055.9" stroke="#c9c9c9" stroke-width="1" fill="none"/><path d="M1616.6 1041.5C1621.3 1046.5 1621.3 1053.7 1616.6 1058.7" stroke="#8d8d8d" stroke-width="1" fill="none"/>
<circle cx="1666.4" cy="1058.4" r="1.7" fill="#ffffff"/><path d="M1660.5 1059A6 6 0 0 1 1667 1052.4" stroke="#ffffff" stroke-width="1.3" fill="none"/><path d="M1655.4 1059A11.2 11.2 0 0 1 1667 1047.3" stroke="#d0d0d0" stroke-width="1.2" fill="none"/><path d="M1650.4 1059A16.3 16.3 0 0 1 1667 1042.3" stroke="#8c8c8c" stroke-width="1.1" fill="none"/>
<path d="M1857.9 1037.8H1882V1056.8H1869.5V1061.8L1864.2 1056.8H1857.9Z" fill="#ffffff"/><path d="M1862.8 1043.2H1877M1862.8 1047.3H1877M1862.8 1051.4H1873" stroke="#2a2a2a" stroke-width="1.1"/>
<circle cx="1881.6" cy="1061.4" r="11.8" fill="#2c2d2e" fill-opacity="0.85" stroke="#b4b4b4" stroke-width="1"/><text x="1881.6" y="1067" text-anchor="middle" font-family="Liberation Sans,sans-serif" font-size="16.5" font-weight="700" fill="#ffffff">6</text>
</svg>
<span class="t" style="left:535.5px;top:8px;font-size:18.8px;color:#e9e9e9;letter-spacing:-0.375px;">Autodesk AutoCAD 2021</span>
<span class="t" style="left:755.5px;top:8px;font-size:18.8px;color:#e9e9e9;letter-spacing:-0.125px;">dokimastiko kaloupi 2.dwg</span>
<span class="t" style="left:1080.0px;top:8px;font-size:16.5px;color:#949ba8;letter-spacing:-0.304px;font-style:italic;">Type a keyword or phrase</span>
<span class="t" style="left:1417.0px;top:8px;font-size:18.8px;color:#e9e9e9;letter-spacing:-0.125px;">ccgeorgio</span>
<span class="t" style="left:83.0px;top:44px;font-size:18.8px;color:#f2f2f2;letter-spacing:-0.500px;">Home</span>
<span class="t" style="left:161.0px;top:44px;font-size:18.8px;color:#ccd0d6;letter-spacing:-0.400px;">Insert</span>
<span class="t" style="left:236.5px;top:44px;font-size:18.8px;color:#ccd0d6;letter-spacing:-0.429px;">Annotate</span>
<span class="t" style="left:339.1px;top:44px;font-size:18.8px;color:#ccd0d6;transform:scaleX(0.9056);transform-origin:0 0;">Parametric</span>
<span class="t" style="left:451.5px;top:44px;font-size:18.8px;color:#ccd0d6;transform:scaleX(0.8902);transform-origin:0 0;">View</span>
<span class="t" style="left:518.0px;top:44px;font-size:18.8px;color:#ccd0d6;letter-spacing:-0.700px;">Manage</span>
<span class="t" style="left:612.0px;top:44px;font-size:18.8px;color:#ccd0d6;">Output</span>
<span class="t" style="left:699.5px;top:44px;font-size:18.8px;color:#ccd0d6;letter-spacing:-0.167px;">Add-ins</span>
<span class="t" style="left:791.5px;top:44px;font-size:18.8px;color:#ccd0d6;letter-spacing:-0.400px;">Collaborate</span>
<span class="t" style="left:913.1px;top:44px;font-size:18.8px;color:#ccd0d6;transform:scaleX(0.9000);transform-origin:0 0;">Express Tools</span>
<span class="t" style="left:1048.0px;top:44px;font-size:18.8px;color:#ccd0d6;letter-spacing:-0.542px;">Featured Apps</span>
<span class="t" style="left:9.7px;top:73px;font-size:18.8px;color:#ececec;letter-spacing:-1.000px;">Draw</span>
<span class="t" style="left:67.7px;top:73px;font-size:18.8px;color:#ececec;letter-spacing:0.400px;">Modify</span>
<span class="t" style="left:142.7px;top:73px;font-size:18.8px;color:#ececec;letter-spacing:-0.111px;">Annotation</span>
<span class="t" style="left:247.8px;top:73px;font-size:18.8px;color:#ececec;transform:scaleX(0.8600);transform-origin:0 0;">Layers</span>
<span class="t" style="left:313.8px;top:73px;font-size:18.8px;color:#ececec;transform:scaleX(0.9022);transform-origin:0 0;">Block</span>
<span class="t" style="left:371.7px;top:73px;font-size:18.8px;color:#ececec;letter-spacing:-0.600px;">Properties</span>
<span class="t" style="left:485.7px;top:73px;font-size:18.8px;color:#ececec;letter-spacing:-0.680px;">Groups</span>
<span class="t" style="left:559.7px;top:73px;font-size:18.8px;color:#ececec;letter-spacing:-0.463px;">Utilities</span>
<span class="t" style="left:633.0px;top:73px;font-size:18.8px;color:#ececec;letter-spacing:-0.250px;">Clipboard</span>
<span class="t" style="left:728.7px;top:73px;font-size:18.8px;color:#ececec;transform:scaleX(0.8780);transform-origin:0 0;">View</span>
<span class="t" style="left:800.7px;top:73px;font-size:18.8px;color:#ececec;transform:scaleX(0.9102);transform-origin:0 0;">Touch</span>
<span class="t" style="left:45.8px;top:110px;font-size:18.8px;color:#c5c9d0;transform:scaleX(0.9051);transform-origin:0 0;">Start</span>
<span class="t" style="left:230.3px;top:110px;font-size:18.8px;color:#f2f2f2;letter-spacing:-0.157px;">dokimastiko kaloupi 2*</span>
<span class="t" style="left:1.5px;top:150px;font-size:17.5px;color:#eaeaea;">[</span>
<span class="t" style="left:21.5px;top:150px;font-size:17.5px;color:#eaeaea;letter-spacing:0.425px;">][Bottom][Conceptual]</span>
<span class="t" style="left:32.4px;top:985px;font-size:18.8px;color:#ffffff;letter-spacing:0.300px;font-weight:700;">Model</span>
<span class="t" style="left:120.5px;top:985px;font-size:18.8px;color:#bfc3ca;letter-spacing:-0.750px;">Layout1</span>
<span class="t" style="left:218.0px;top:985px;font-size:18.8px;color:#bfc3ca;letter-spacing:-0.500px;">Layout2</span>
<span class="t" style="left:979.0px;top:992px;font-size:18.8px;color:#f4f4f4;letter-spacing:-0.975px;">MODEL</span>
<span class="t" style="left:1565.9px;top:993px;font-size:17.5px;color:#9097a3;transform:scaleX(0.8870);transform-origin:0 0;">1:1</span>
<span class="t" style="left:132.8px;top:1041px;font-size:22px;color:#2a2a2a;letter-spacing:0.181px;">Type here to search</span>
<span class="t" style="left:1335.5px;top:1043px;font-size:20.5px;color:#ffffff;letter-spacing:-0.600px;">95°F</span>
<span class="t" style="left:1692.0px;top:1043px;font-size:17px;color:#ffffff;transform:scaleX(0.9286);transform-origin:0 0;">ENG</span>
<span class="t" style="left:1757.6px;top:1029px;font-size:17.5px;color:#ffffff;letter-spacing:0.200px;">3:18 μμ</span>
<span class="t" style="left:1751.0px;top:1057px;font-size:17.5px;color:#ffffff;letter-spacing:0.743px;">5/6/2022</span>
</body></html>
